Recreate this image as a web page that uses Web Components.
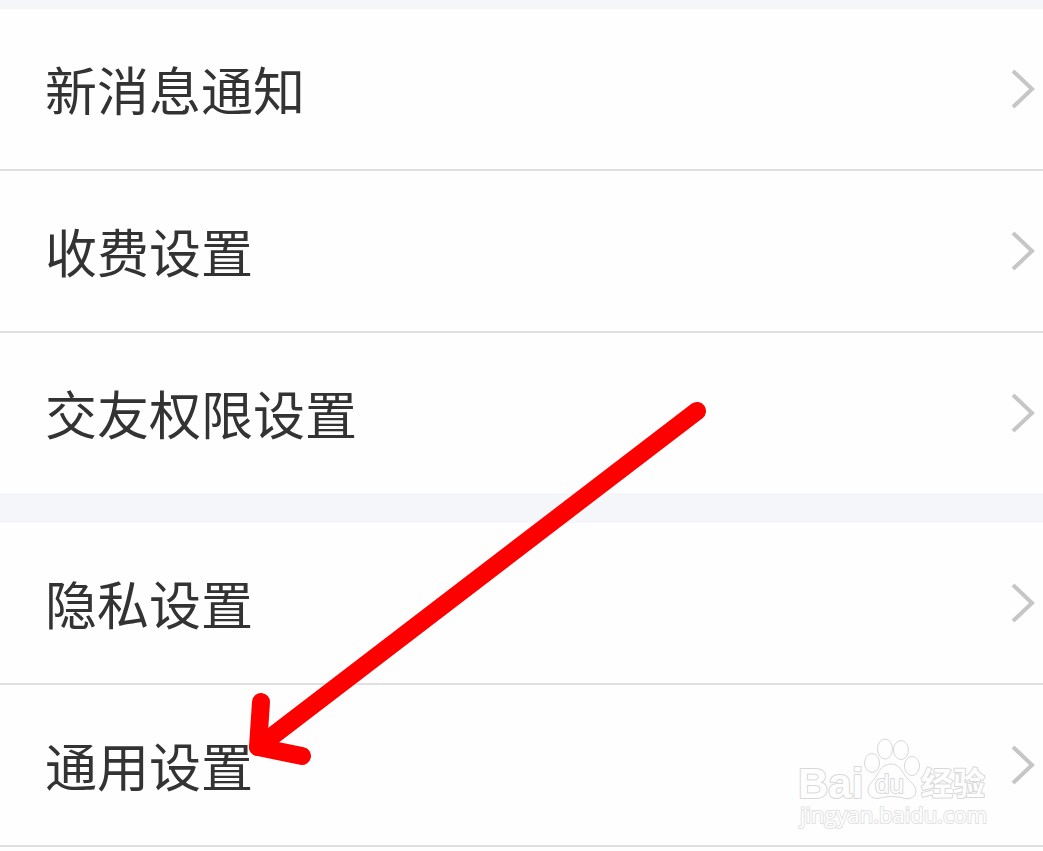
<!DOCTYPE html>
<html lang="zh-CN">
<head>
<meta charset="utf-8">
<meta name="viewport" content="width=device-width, initial-scale=1">
<title>设置</title>
<style>
  body {
    margin: 0;
    background: #fefefe;
    color: #333;
    font-family: "Noto Sans CJK SC", sans-serif;
  }
</style>
</head>
<body>

<settings-page>
  <settings-group>
    <settings-row href="#notify">新消息通知</settings-row>
    <settings-row href="#charge">收费设置</settings-row>
    <settings-row href="#friends">交友权限设置</settings-row>
  </settings-group>
  <settings-group>
    <settings-row href="#privacy">隐私设置</settings-row>
    <settings-row href="#general">通用设置</settings-row>
  </settings-group>
  <site-watermark slot="overlay"></site-watermark>
  <pointer-arrow slot="overlay"></pointer-arrow>
</settings-page>

<script>
function makeTemplate(html) {
  const t = document.createElement('template');
  t.innerHTML = html;
  return t;
}

const pageTemplate = makeTemplate(`
<style>
  :host {
    display: block;
    position: relative;
    min-height: 100vh;
    overflow: hidden;
  }
  main {
    display: flex;
    flex-direction: column;
    gap: 30px;
    padding-top: 9px;
    background: #f5f6fa;
  }
</style>
<main><slot></slot></main>
<slot name="overlay"></slot>
`);

class SettingsPage extends HTMLElement {
  connectedCallback() {
    this.attachShadow({ mode: 'open' });
    this.shadowRoot.appendChild(pageTemplate.content.cloneNode(true));
  }
}
customElements.define('settings-page', SettingsPage);

const groupTemplate = makeTemplate(`
<style>
  :host {
    display: block;
    background: #fefefe;
  }
  nav {
    display: flex;
    flex-direction: column;
  }
  ::slotted(settings-row) {
    border-bottom: 2px solid #e0e0e0;
  }
  /* the grey gap closes every group but the last */
  :host(:not(:last-of-type)) ::slotted(settings-row:last-of-type) {
    border-bottom: 0;
  }
</style>
<nav><slot></slot></nav>
`);

class SettingsGroup extends HTMLElement {
  connectedCallback() {
    this.attachShadow({ mode: 'open' });
    this.shadowRoot.appendChild(groupTemplate.content.cloneNode(true));
  }
}
customElements.define('settings-group', SettingsGroup);

const rowTemplate = makeTemplate(`
<style>
  :host {
    display: block;
  }
  a {
    display: flex;
    align-items: center;
    justify-content: space-between;
    padding: 40px 8px 40px 45px;
    color: inherit;
    text-decoration: none;
    font-size: 52px;
    line-height: 80px;
  }
  svg {
    flex: none;
    width: 24px;
    height: 40px;
    fill: none;
    stroke: #c6c6c6;
    stroke-width: 4;
  }
</style>
<a><span><slot></slot></span><svg viewBox="0 0 24 40" aria-hidden="true"><path d="M2 2 L21 20 L2 38"/></svg></a>
`);

class SettingsRow extends HTMLElement {
  connectedCallback() {
    this.attachShadow({ mode: 'open' });
    this.shadowRoot.appendChild(rowTemplate.content.cloneNode(true));
    this.shadowRoot.querySelector('a').href = this.getAttribute('href');
  }
}
customElements.define('settings-row', SettingsRow);

// Hand-drawn arrow that points at the last entry
const arrowTemplate = makeTemplate(`
<style>
  :host {
    position: absolute;
    left: 240px;
    top: 400px;
    pointer-events: none;
  }
  svg {
    display: block;
    width: 480px;
    height: 380px;
    fill: none;
    stroke: #fe0000;
    stroke-width: 18;
    stroke-linecap: round;
    stroke-linejoin: round;
  }
</style>
<svg viewBox="0 0 480 380" aria-hidden="true">
  <path d="M457 11 L18 347"/>
  <path d="M21 302 L18 347 L62 356"/>
</svg>
`);

class PointerArrow extends HTMLElement {
  connectedCallback() {
    this.attachShadow({ mode: 'open' });
    this.shadowRoot.appendChild(arrowTemplate.content.cloneNode(true));
  }
}
customElements.define('pointer-arrow', PointerArrow);

const watermarkTemplate = makeTemplate(`
<style>
  :host {
    position: absolute;
    right: 53px;
    top: 736px;
    pointer-events: none;
  }
  svg {
    display: block;
    width: 192px;
    height: 96px;
    fill: #fefefe;
    stroke: #d8d8d8;
    stroke-width: 1;
  }
  text {
    paint-order: stroke;
    stroke-width: 2;
    stroke-linejoin: round;
  }
  .latin {
    font: bold 42px "Liberation Sans", sans-serif;
  }
  .du {
    font: 26px "Liberation Sans", sans-serif;
  }
  .cjk {
    font: bold 32px "Noto Sans CJK SC", sans-serif;
  }
  .url {
    font: 22px "Open Sans", sans-serif;
    stroke: #e2e2e2;
  }
</style>
<svg viewBox="0 0 192 96">
  <text class="latin" x="0" y="62">Bai</text>
  <ellipse cx="74" cy="27" rx="7.5" ry="9.5"/>
  <ellipse cx="87" cy="13" rx="7.5" ry="10"/>
  <ellipse cx="103" cy="14" rx="7.5" ry="9.5"/>
  <ellipse cx="114" cy="30" rx="7.5" ry="9.5"/>
  <path d="M93 28 C101 28 104 35 108 41 C113 46 118 50 118 56 C117 62 110 64 105 62 C97 60 90 60 82 62 C76 64 70 60 70 54 C70 48 76 45 79 39 C82 33 86 28 93 28 Z"/>
  <text class="du" x="77" y="57">du</text>
  <text class="cjk" x="123" y="59">经验</text>
  <text class="url" x="2" y="87">jingyan.baidu.com</text>
</svg>
`);

class SiteWatermark extends HTMLElement {
  connectedCallback() {
    this.attachShadow({ mode: 'open' });
    this.shadowRoot.appendChild(watermarkTemplate.content.cloneNode(true));
  }
}
customElements.define('site-watermark', SiteWatermark);
</script>
</body>
</html>
